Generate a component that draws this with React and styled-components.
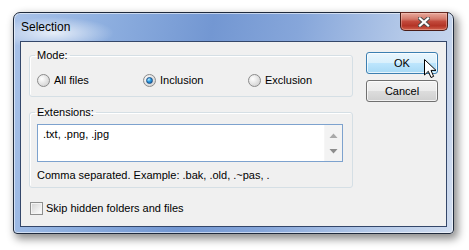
import React from 'react';
import styled, { createGlobalStyle } from 'styled-components';

const GlobalStyle = createGlobalStyle`
    html, body {
        margin: 0;
        padding: 0;
        background: #ffffff;
    }
    body {
        font-family: 'Liberation Sans', Arial, sans-serif;
        font-size: 11px;
        color: #000000;
    }
`

const App = () => {
    return (
        <Stage>
            <GlobalStyle />
            <Window>
                <TitleBar>
                    <Title>Selection</Title>
                    <CloseButton>
                        <svg width="12" height="10" viewBox="0 0 12 10">
                            <path d="M2 1.5 L10 8.5 M10 1.5 L2 8.5" stroke="#4a4a4a" strokeWidth="4" strokeLinecap="square" />
                            <path d="M2 1.5 L10 8.5 M10 1.5 L2 8.5" stroke="#ffffff" strokeWidth="2.2" strokeLinecap="square" />
                        </svg>
                    </CloseButton>
                </TitleBar>
                <Client>
                    <MainColumn>
                        <Group>
                            <Legend>Mode:</Legend>
                            <RadioRow>
                                <Option><Radio /><span>All files</span></Option>
                                <Option><Radio $checked /><span>Inclusion</span></Option>
                                <Option><Radio /><span>Exclusion</span></Option>
                            </RadioRow>
                        </Group>
                        <Group $spaced>
                            <Legend>Extensions:</Legend>
                            <Field>
                                <FieldText>.txt, .png, .jpg</FieldText>
                                <ScrollBar>
                                    <svg width="9" height="6" viewBox="0 0 9 6">
                                        <polygon points="4.5,0.5 8.5,5 0.5,5" fill="#a9a9a9" />
                                    </svg>
                                    <svg width="9" height="6" viewBox="0 0 9 6">
                                        <polygon points="0.5,1 8.5,1 4.5,5.5" fill="#8c8c8c" />
                                    </svg>
                                </ScrollBar>
                            </Field>
                            <Hint>Comma separated. Example: .bak, .old, .~pas, .</Hint>
                        </Group>
                        <CheckRow>
                            <CheckBox />
                            <span>Skip hidden folders and files</span>
                        </CheckRow>
                    </MainColumn>
                    <ButtonColumn>
                        <Button $focused>
                            OK
                            <Pointer width="13" height="20" viewBox="0 0 13 20">
                                <path d="M0.5 0.5 L0.5 16 L4.3 12.3 L7 18.5 L9.6 17.4 L7 11.4 L12 11.4 Z" fill="#ffffff" stroke="#000000" strokeWidth="1" strokeLinejoin="miter" />
                            </Pointer>
                        </Button>
                        <Button>Cancel</Button>
                    </ButtonColumn>
                </Client>
            </Window>
        </Stage>
    )
}

const Stage = styled.div`
    width: 469px;
    height: 250px;
    padding: 12px 0 0 13px;
    box-sizing: border-box;
    overflow: hidden;
`

const Window = styled.div`
    width: 441px;
    height: 222px;
    box-sizing: border-box;
    display: flex;
    flex-direction: column;
    padding: 0 6px 6px 6px;
    border: 1px solid #1f2a3c;
    border-radius: 7px 7px 4px 4px;
    background:
        radial-gradient(ellipse 60px 16px at 40px 20px, rgba(255, 255, 255, 0.75), rgba(255, 255, 255, 0) 100%),
        linear-gradient(100deg, #a9c2e8 0%, #8fb0e0 18%, #7397d2 42%, #86a6da 60%, #b3c8e8 82%, #d0dcef 100%);
    box-shadow:
        inset 0 0 0 1px rgba(255, 255, 255, 0.55),
        3px 4px 9px 1px rgba(0, 0, 0, 0.45);
`

const TitleBar = styled.div`
    height: 28px;
    flex-shrink: 0;
    display: flex;
    justify-content: space-between;
    align-items: flex-start;
    padding-left: 1px;
`

const Title = styled.div`
    margin-top: 7px;
    font-size: 12px;
    line-height: 14px;
    color: #000000;
`

const CloseButton = styled.div`
    width: 48px;
    height: 19px;
    margin-top: -1px;
    margin-right: -1px;
    box-sizing: border-box;
    display: flex;
    align-items: center;
    justify-content: center;
    border: 1px solid #4a1c17;
    border-top-color: #6a2a22;
    border-radius: 0 0 5px 5px;
    background: linear-gradient(#e9a99c 0%, #d47a6b 35%, #c24a3c 50%, #b33426 75%, #d0604c 100%);
    box-shadow: inset 0 0 0 1px rgba(255, 220, 210, 0.35);
`

const Client = styled.div`
    flex: 1;
    display: flex;
    gap: 13px;
    padding: 7px 8px 0 8px;
    border: 1px solid #34476a;
    background: #f0f0f0;
`

const MainColumn = styled.div`
    width: 324px;
    display: flex;
    flex-direction: column;
`

const Group = styled.fieldset`
    margin: ${p => (p.$spaced ? '9px 0 0 0' : '0')};
    padding: 6px 10px 5px 7px;
    min-width: 0;
    border: 1px solid #d5dfe5;
    border-radius: 3px;
    box-shadow: inset 1px 1px 0 #ffffff;
`

const Legend = styled.legend`
    padding: 0 2px;
    margin-left: -2px;
    font-size: 11px;
    line-height: 12px;
`

const RadioRow = styled.div`
    display: grid;
    grid-template-columns: 106px 105px 1fr;
    padding: 7px 0 4px 0;
`

const Option = styled.label`
    display: flex;
    align-items: center;
    gap: 4px;
    height: 13px;
    line-height: 13px;
`

const Radio = styled.span`
    width: 13px;
    height: 13px;
    box-sizing: border-box;
    border-radius: 50%;
    border: 1px solid #8b8b8b;
    background: radial-gradient(circle at 35% 35%, #ffffff 0%, #e6e6e6 45%, #c9c9c9 100%);
    display: flex;
    align-items: center;
    justify-content: center;
    &::after {
        content: '';
        width: 5px;
        height: 5px;
        border-radius: 50%;
        display: ${p => (p.$checked ? 'block' : 'none')};
        background: radial-gradient(circle at 35% 30%, #b9ecff 0%, #2a9ae0 45%, #0b5597 100%);
        border: 1px solid #1d4f86;
    }
`

const Field = styled.div`
    width: 306px;
    height: 38px;
    box-sizing: border-box;
    display: flex;
    border: 1px solid #7da2ce;
    background: #ffffff;
`

const FieldText = styled.div`
    flex: 1;
    padding: 3px 5px;
    line-height: 13px;
`

const ScrollBar = styled.div`
    width: 17px;
    display: flex;
    flex-direction: column;
    justify-content: space-between;
    align-items: center;
    padding: 8px 0 7px 0;
    background: #f3f3f3;
    border-left: 1px solid #f6f6f6;
`

const Hint = styled.div`
    margin-top: 6px;
    line-height: 14px;
`

const CheckRow = styled.label`
    display: flex;
    align-items: center;
    gap: 3px;
    margin: 14px 0 0 1px;
    height: 13px;
    line-height: 13px;
`

const CheckBox = styled.span`
    width: 13px;
    height: 13px;
    box-sizing: border-box;
    border: 1px solid #8e8f8f;
    background: linear-gradient(135deg, #d2d2d2 0%, #eeeeee 60%, #ffffff 100%);
    box-shadow: inset 0 0 0 1px #f4f4f4;
`

const ButtonColumn = styled.div`
    width: 73px;
    padding-top: 3px;
    display: flex;
    flex-direction: column;
    gap: 6px;
`

const Button = styled.div`
    position: relative;
    height: 22px;
    box-sizing: border-box;
    display: flex;
    align-items: center;
    justify-content: center;
    border: 1px solid ${p => (p.$focused ? '#3c7fb1' : '#707070')};
    border-radius: 3px;
    background: ${p => (p.$focused
        ? 'linear-gradient(#eaf6fd 0%, #d9f0fc 50%, #bee6fd 50%, #a7d9f5 100%)'
        : 'linear-gradient(#f2f2f2 0%, #ebebeb 50%, #dddddd 50%, #cfcfcf 100%)')};
    box-shadow: inset 0 0 0 1px rgba(255, 255, 255, 0.7);
`

const Pointer = styled.svg`
    position: absolute;
    left: 57px;
    top: 6px;
`

export default App;
